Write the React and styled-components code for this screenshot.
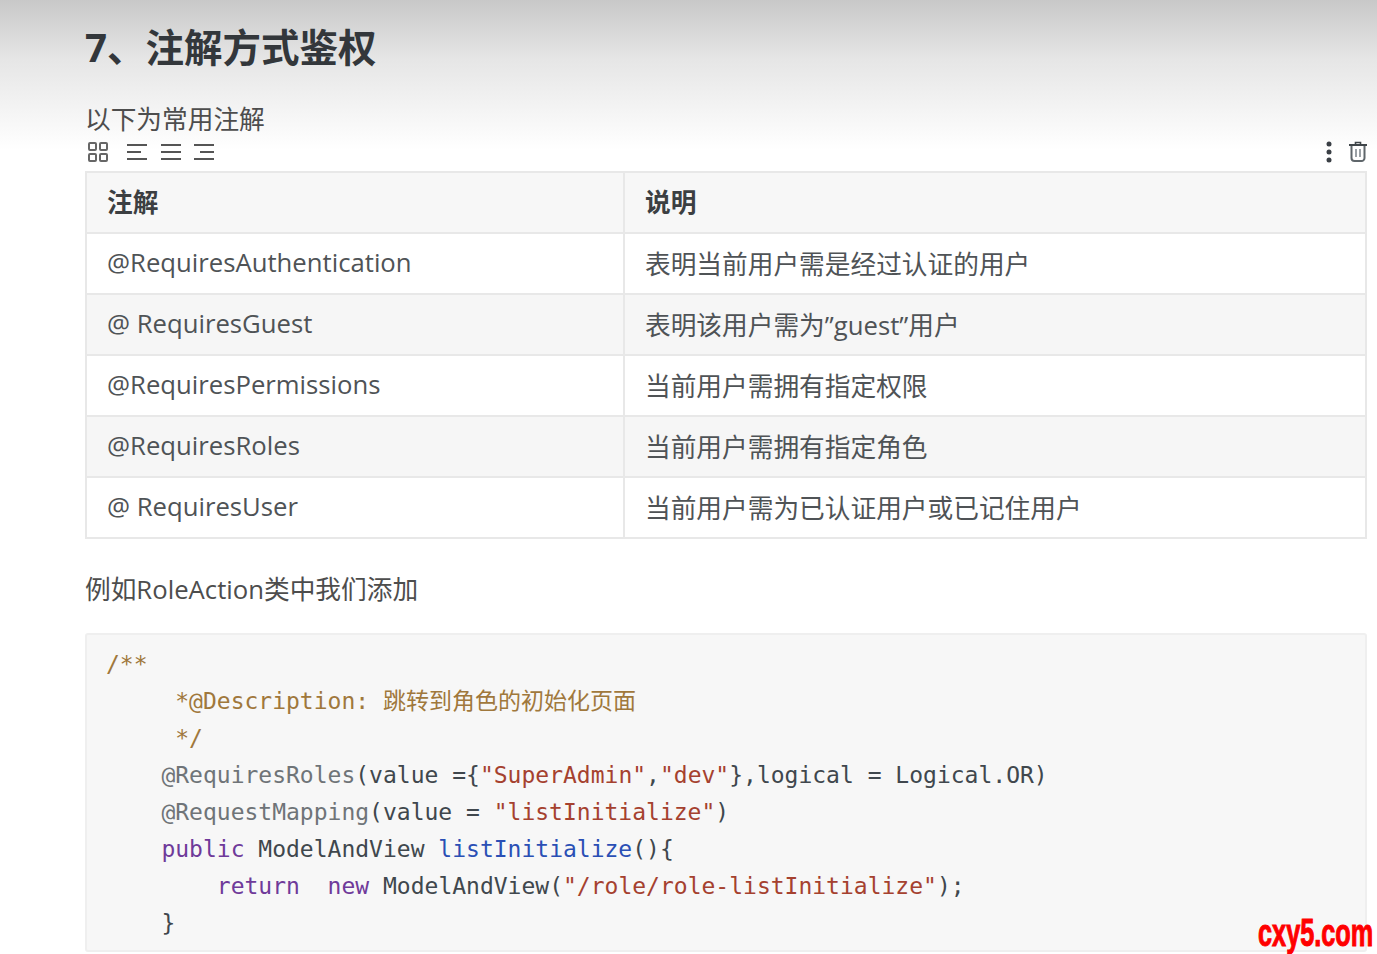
import styled, { createGlobalStyle } from 'styled-components'

const GlobalStyle = createGlobalStyle`
	html, body {
		margin: 0;
		padding: 0;
		height: 954px;
		overflow: hidden;
		background: #fff;
	}
	body {
		font-family: 'Open Sans', 'Noto Sans CJK SC', sans-serif;
		color: #4a4a4a;
	}
`

const rows = [
	['@RequiresAuthentication', '表明当前用户需是经过认证的用户'],
	['@ RequiresGuest', '表明该用户需为”guest”用户'],
	['@RequiresPermissions', '当前用户需拥有指定权限'],
	['@RequiresRoles', '当前用户需拥有指定角色'],
	['@ RequiresUser', '当前用户需为已认证用户或已记住用户'],
]

function GridIcon() {
	return (
		<svg width='22' height='22' viewBox='0 0 22 22' fill='none' stroke='#666' strokeWidth='2'>
			<rect x='2' y='2' width='7' height='7' rx='1' />
			<rect x='13' y='2' width='7' height='7' rx='1' />
			<rect x='2' y='13' width='7' height='7' rx='1' />
			<rect x='13' y='13' width='7' height='7' rx='1' />
		</svg>
	)
}

function AlignIcon({ middle }) {
	return (
		<svg width='20' height='20' viewBox='0 0 20 20' fill='none' stroke='#555' strokeWidth='2'>
			<path d='M0 3h20' />
			<path d={middle} />
			<path d='M0 17h20' />
		</svg>
	)
}

function MoreIcon() {
	return (
		<svg width='6' height='22' viewBox='0 0 6 22' fill='#3a3f45'>
			<circle cx='3' cy='3' r='2.5' />
			<circle cx='3' cy='11' r='2.5' />
			<circle cx='3' cy='19' r='2.5' />
		</svg>
	)
}

function TrashIcon() {
	return (
		<svg width='18' height='21' viewBox='0 0 18 21' fill='none' stroke='#5f666b' strokeWidth='1.6'>
			<path d='M0 4h18' stroke='#3f4549' strokeWidth='2' />
			<path d='M6.5 3.5V1.5h5v2' stroke='#3f4549' />
			<path d='M2.5 5v12a3 3 0 0 0 3 3h7a3 3 0 0 0 3-3V5' strokeWidth='2' />
			<path d='M7 8v8M11 8v8' stroke='#9aa0a5' strokeWidth='2' />
		</svg>
	)
}

export default function App() {
	return (
		<>
			<GlobalStyle />
			<Page>
				<Heading>7、注解方式鉴权</Heading>
				<Paragraph>以下为常用注解</Paragraph>
				<Toolbar>
					<ToolGroup>
						<GridIcon />
						<AlignGroup>
							<AlignIcon middle='M0 10h14' />
							<AlignIcon middle='M0 10h20' />
							<AlignIcon middle='M6 10h14' />
						</AlignGroup>
					</ToolGroup>
					<ToolGroup>
						<MoreIcon />
						<TrashIcon />
					</ToolGroup>
				</Toolbar>
				<Table>
					<colgroup>
						<col width='538' />
						<col />
					</colgroup>
					<thead>
						<tr>
							<HeadCell>注解</HeadCell>
							<HeadCell>说明</HeadCell>
						</tr>
					</thead>
					<tbody>
						{rows.map(([name, text]) => (
							<Row key={name}>
								<Cell>{name}</Cell>
								<Cell>{text}</Cell>
							</Row>
						))}
					</tbody>
				</Table>
				<Example>例如RoleAction类中我们添加</Example>
				<CodeBlock>
					<CodeLine>
						<Comment>/**</Comment>
					</CodeLine>
					<CodeLine $indent={5}>
						<Comment>*@Description: 跳转到角色的初始化页面</Comment>
					</CodeLine>
					<CodeLine $indent={5}>
						<Comment>*/</Comment>
					</CodeLine>
					<CodeLine $indent={4}>
						<Meta>@RequiresRoles</Meta>
						<Plain>(value ={'{'}</Plain>
						<Str>"SuperAdmin"</Str>
						<Plain>,</Plain>
						<Str>"dev"</Str>
						<Plain>{'},logical = Logical.OR)'}</Plain>
					</CodeLine>
					<CodeLine $indent={4}>
						<Meta>@RequestMapping</Meta>
						<Plain>(value = </Plain>
						<Str>"listInitialize"</Str>
						<Plain>)</Plain>
					</CodeLine>
					<CodeLine $indent={4}>
						<Keyword>public</Keyword>
						<Plain> ModelAndView </Plain>
						<Title>listInitialize</Title>
						<Plain>(){'{'}</Plain>
					</CodeLine>
					<CodeLine $indent={8}>
						<Keyword>return</Keyword>
						<Plain>  </Plain>
						<Keyword>new</Keyword>
						<Plain> ModelAndView(</Plain>
						<Str>"/role/role-listInitialize"</Str>
						<Plain>);</Plain>
					</CodeLine>
					<CodeLine $indent={4}>
						<Plain>{'}'}</Plain>
					</CodeLine>
				</CodeBlock>
				<Watermark>cxy5.com</Watermark>
			</Page>
		</>
	)
}

const Page = styled.main`
	position: relative;
	box-sizing: border-box;
	height: 954px;
	padding: 0 10px 0 85px;
	overflow: hidden;
	background: linear-gradient(to bottom, #c8c8c8 0, #e6e6e6 60px, #f4f4f4 110px, #fff 150px);
`

const Heading = styled.h1`
	margin: 0;
	padding-top: 21px;
	font-size: 38.5px;
	line-height: 52px;
	font-weight: 700;
	color: #33373b;
`

const Paragraph = styled.p`
	margin: 25px 0 0;
	font-size: 25.7px;
	line-height: 44px;
	height: 34px;
	color: #4d4d4d;
`

const Toolbar = styled.div`
	display: flex;
	justify-content: space-between;
	align-items: center;
	box-sizing: border-box;
	height: 39px;
	padding: 0 0 0 2px;
`

const ToolGroup = styled.div`
	display: flex;
	align-items: center;
	gap: 17px;
`

const AlignGroup = styled.div`
	display: flex;
	gap: 13.5px;
	margin-left: 1px;
`

const Table = styled.table`
	width: 1282px;
	table-layout: fixed;
	border-collapse: collapse;
	border: 2px solid #e8e8e8;
	font-size: 25.7px;
`

const HeadCell = styled.th`
	height: 55px;
	padding: 0 20px 4px;
	text-align: left;
	font-weight: 700;
	background: #f7f7f7;
	border: 2px solid #e8e8e8;
	color: #3c3f42;
`

const Row = styled.tr`
	background: #fff;

	&:nth-child(even) {
		background: #f6f6f6;
	}
`

const Cell = styled.td`
	height: 57px;
	padding: 0 20px 2px;
	border: 2px solid #e8e8e8;
	color: #4f5356;
	white-space: nowrap;
`

const Example = styled.p`
	margin: 29px 0 0;
	font-size: 25.7px;
	line-height: 44px;
	color: #4d4d4d;
`

const CodeBlock = styled.div`
	box-sizing: border-box;
	width: 1282px;
	height: 319px;
	margin: 21px 0 0;
	padding: 11px 19px;
	font-family: 'DejaVu Sans Mono', 'Noto Sans CJK SC', monospace;
	font-size: 23px;
	line-height: 37px;
	color: #40474d;
	background: #f7f7f7;
	border: 2px solid #efefef;
	border-radius: 3px;
`

const CodeLine = styled.div`
	padding-left: ${({ $indent = 0 }) => $indent * 13.85}px;
	white-space: pre;
`

const Plain = styled.span`
	color: #40474d;
`

const Comment = styled.span`
	color: #a0783c;
`

const Meta = styled.span`
	color: #6f7478;
`

const Str = styled.span`
	color: #a5412f;
`

const Keyword = styled.span`
	color: #6f3a9a;
`

const Title = styled.span`
	color: #2a4fb5;
`

const Watermark = styled.div`
	position: absolute;
	right: 4px;
	bottom: 1px;
	font-family: 'Liberation Sans', sans-serif;
	font-size: 38px;
	font-weight: 700;
	line-height: 40px;
	color: #f00;
	-webkit-text-stroke: 1px #f00;
	transform: scaleX(0.665);
	transform-origin: right center;
`
